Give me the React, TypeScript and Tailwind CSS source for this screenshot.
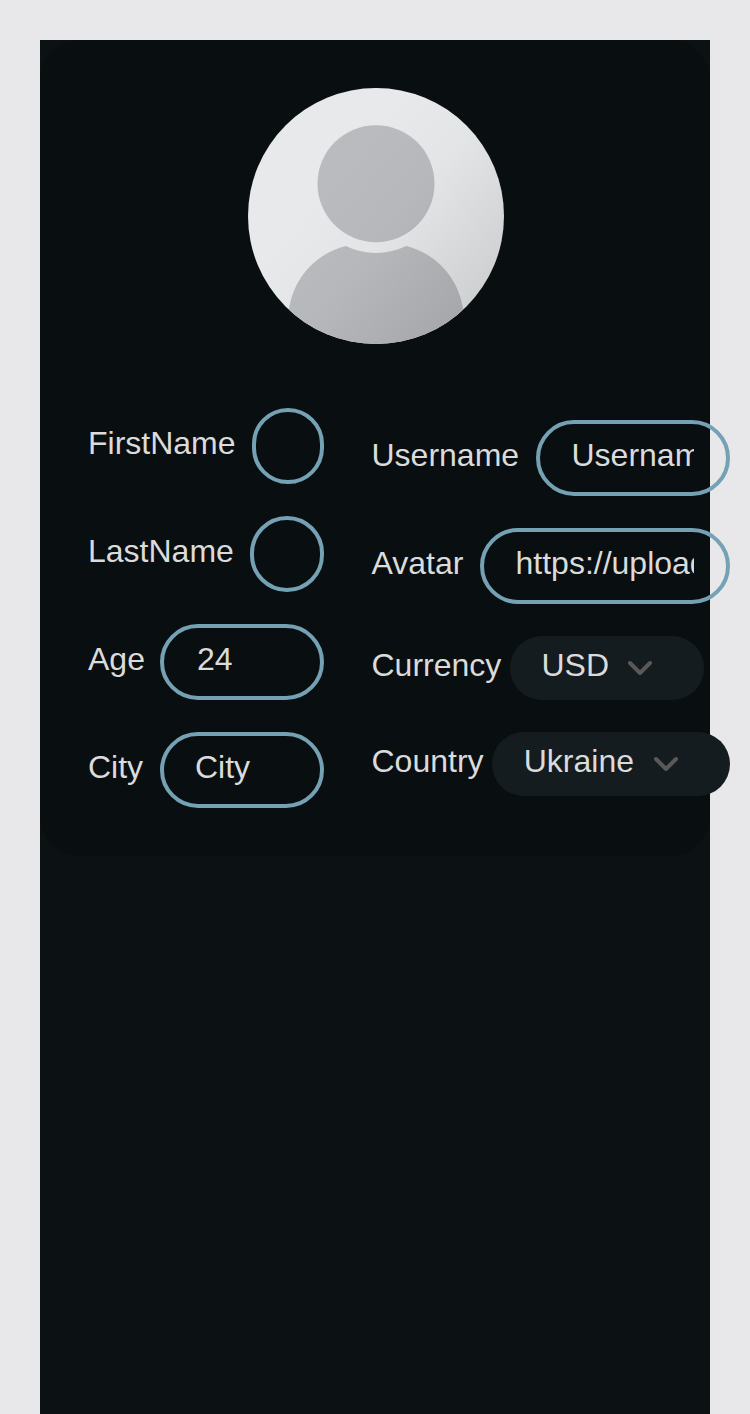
import React from "react";

const text = "text-[32px] leading-[36px]";

function InputRow({ label, value, width, pad = "pl-[31.5px]" }: { label: string; value: string; width: string; pad?: string }) {
  return (
    <label className="flex h-[76px] items-start justify-between">
      <span className={`${text} pt-[17px]`}>{label}</span>
      <input
        className={`${text} ${width} ${pad} h-[76px] shrink-0 rounded-[38px] border-4 border-[#74a2b4] bg-transparent pt-[13px] pr-8 pb-[19px] outline-none`}
        defaultValue={value}
      />
    </label>
  );
}

function SelectRow({ label, value, width }: { label: string; value: string; width: string }) {
  return (
    <div className="flex h-16 items-start gap-[8.5px]">
      <span className={`${text} pt-[11px]`}>{label}</span>
      <button className={`${text} ${width} flex h-16 shrink-0 items-start justify-between rounded-full bg-[#151c1f] pt-[11px] pr-[52px] pl-[31.7px]`}>
        <span>{value}</span>
        <svg className="mt-[13px] h-4 w-6 shrink-0" viewBox="0 0 24 16" fill="none">
          <path d="M2 3L12 13L22 3" stroke="#5b5957" strokeWidth="4" strokeLinecap="round" strokeLinejoin="round" />
        </svg>
      </button>
    </div>
  );
}

function Avatar() {
  return (
    <svg className="h-64 w-64 rounded-full" viewBox="0 0 256 256">
      <defs>
        <linearGradient id="shade" gradientUnits="userSpaceOnUse" x1="90" y1="80" x2="240" y2="205">
          <stop offset="0" stopColor="#000" stopOpacity="0" />
          <stop offset="0.4" stopColor="#000" stopOpacity="0.02" />
          <stop offset="1" stopColor="#000" stopOpacity="0.11" />
        </linearGradient>
      </defs>
      <rect width="256" height="256" fill="#e7e9ea" />
      <circle cx="128" cy="95.7" r="58.5" fill="#babbbf" />
      <path d="M97.8 158A69 69 0 0 0 158.2 158A76 76 0 0 1 215.8 232V256H40.2V232A76 76 0 0 1 97.8 158Z" fill="#babbbf" />
      <rect width="256" height="256" fill="url(#shade)" />
    </svg>
  );
}

export default function App() {
  return (
    <div className="h-[1414px] overflow-hidden bg-[#e8e8ea] px-10 pt-10 font-['Liberation_Sans',Arial,sans-serif] text-[#dbdbdb]">
      <main className="h-[1374px] bg-[#0c1113]">
        <section className="flex h-[816px] flex-col gap-16 rounded-[40px] bg-[#090e10] p-12">
          <div className="flex h-64 pl-40">
            <Avatar />
          </div>
          <form className="flex items-center gap-[47.5px]">
            <div className="flex w-[236px] shrink-0 flex-col gap-8">
              <InputRow label="FirstName" value="" width="w-[72px]" />
              <InputRow label="LastName" value="" width="w-[74px]" />
              <InputRow label="Age" value="24" width="w-[164px]" pad="pl-[33px]" />
              <InputRow label="City" value="City" width="w-[164px]" pad="pl-[31px]" />
            </div>
            <div className="flex w-[358.5px] shrink-0 flex-col gap-8">
              <InputRow label="Username" value="Username" width="w-[194px]" />
              <InputRow label="Avatar" value="https://upload.wikimedia.org" width="w-[250px]" />
              <SelectRow label="Currency" value="USD" width="w-[194px]" />
              <SelectRow label="Country" value="Ukraine" width="w-[238px]" />
            </div>
          </form>
        </section>
      </main>
    </div>
  );
}
